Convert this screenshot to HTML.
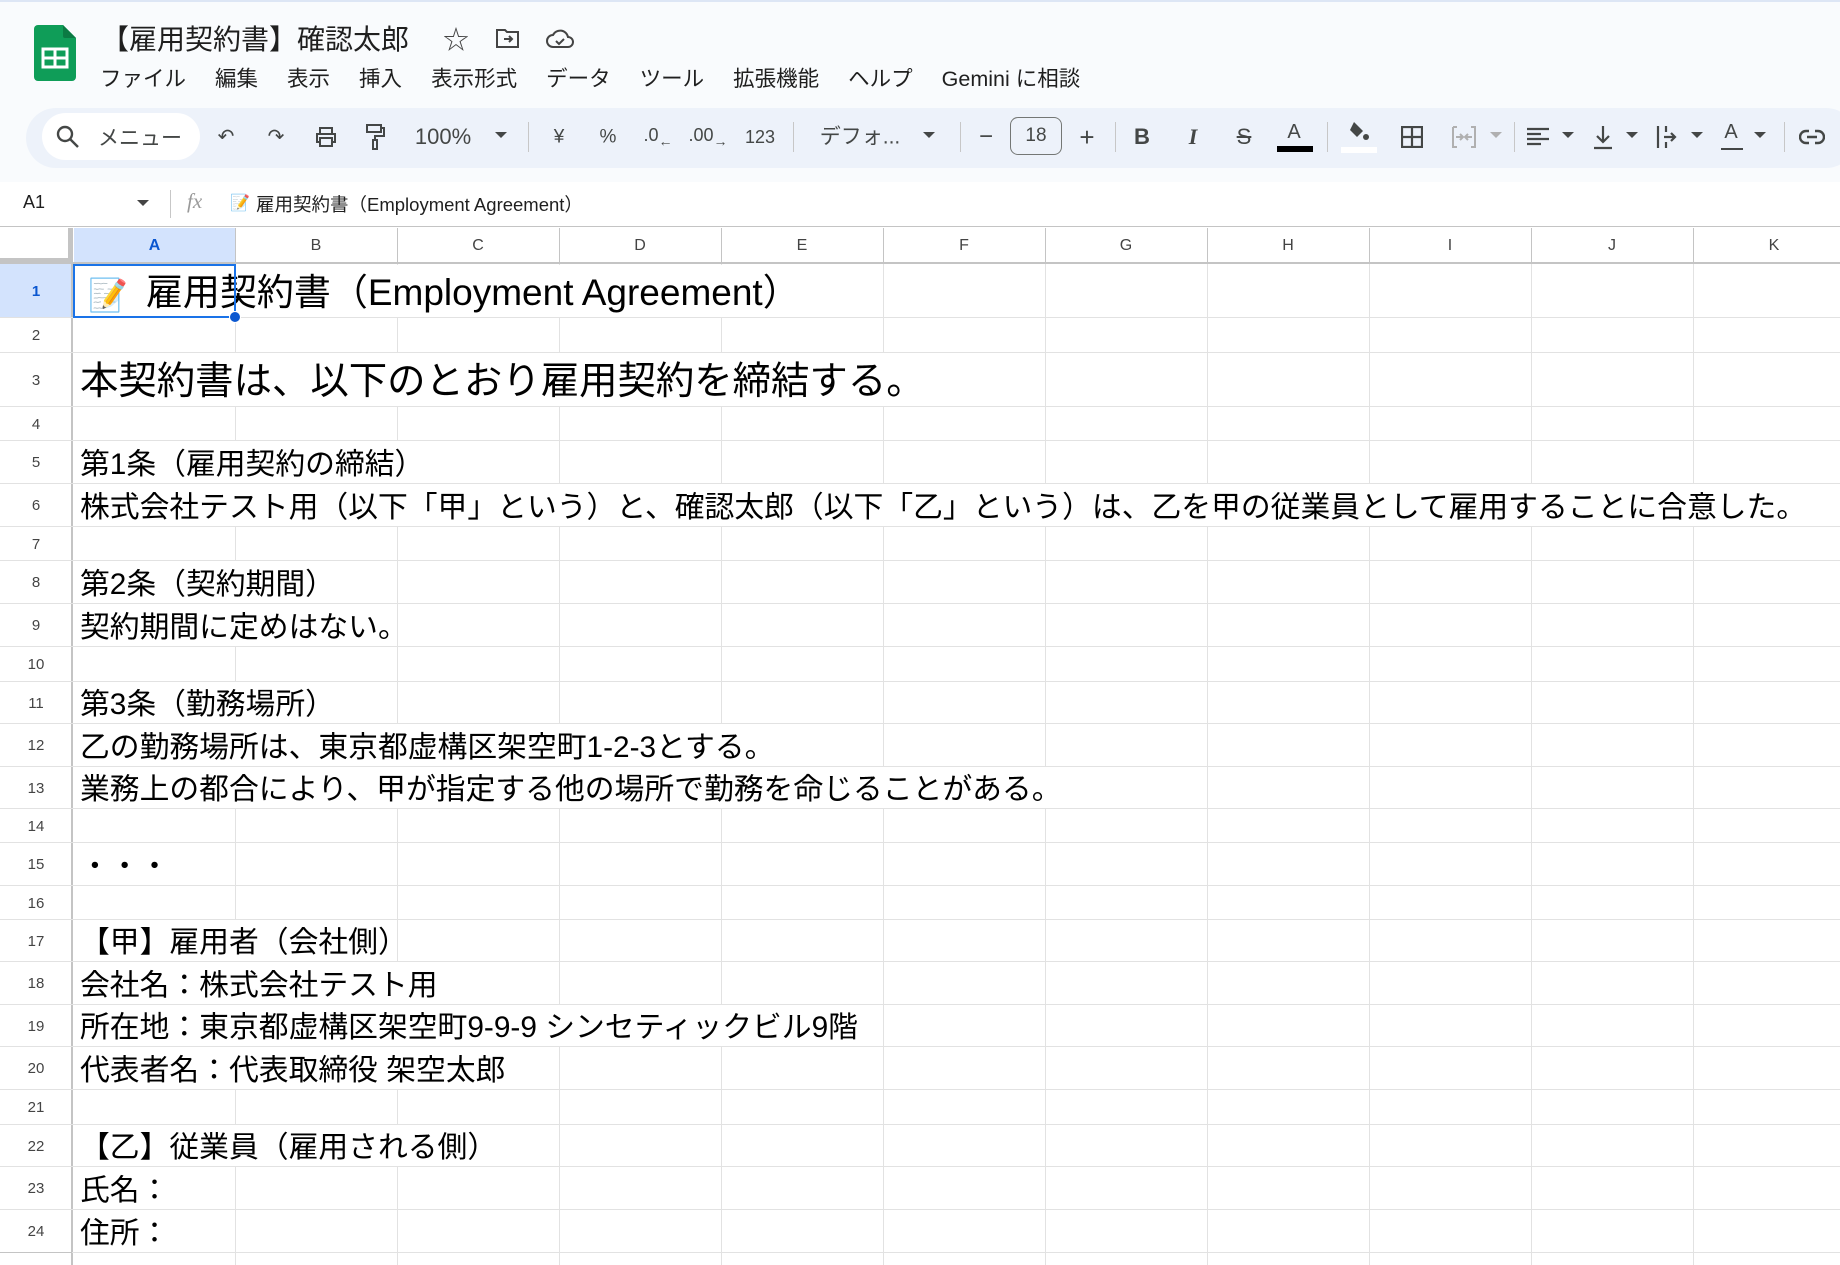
<!DOCTYPE html>
<html><head><meta charset="utf-8">
<style>
*{margin:0;padding:0;box-sizing:border-box}
body{width:1840px;height:1265px;overflow:hidden;background:#fff;font-family:"Liberation Sans","Noto Sans CJK JP",sans-serif;position:relative;color:#1f1f1f}
.a{position:absolute}
.top{left:0;top:0;width:1840px;height:182px;background:#f9fbfd;border-top:2px solid #dde6f5}
.menu span{margin-right:29px}
.tb{left:26px;top:108px;width:1830px;height:60px;background:#edf2fa;border-radius:30px}
.ic{position:absolute;top:137px;transform:translate(-50%,-50%);color:#444746;font-size:20px;line-height:1}
.sep{position:absolute;top:122px;width:1px;height:30px;background:#c7c7c7}
.car{position:absolute;top:132px;width:0;height:0;border-left:6px solid transparent;border-right:6px solid transparent;border-top:6px solid #444746}
.vl{position:absolute;width:1px;background:#e2e2e2}
.hl{position:absolute;height:1px;background:#e2e2e2;left:0;width:1840px}
.rn{position:absolute;left:0;width:72px;text-align:center;font-size:15px;color:#444;display:flex;align-items:center;justify-content:center}
.cl{position:absolute;top:228px;height:35px;text-align:center;font-size:16px;color:#444;display:flex;align-items:center;justify-content:center}
.t{position:absolute;left:75px;background:#fff;font-size:29.8px;color:#000;white-space:nowrap;padding-left:5px;display:flex;align-items:flex-end;font-family:"Liberation Sans","Noto Sans CJK JP",sans-serif;line-height:1}
</style></head><body>
<div class="a top"></div>
<svg class="a" style="left:34px;top:25px" width="42" height="56" viewBox="0 0 42 56"><path d="M4 0h25l13 13v39a4 4 0 0 1-4 4H4a4 4 0 0 1-4-4V4a4 4 0 0 1 4-4z" fill="#0f9d58"/><path d="M29 0l13 13H31a2 2 0 0 1-2-2z" fill="#0b7a43"/><rect x="9" y="24" width="24" height="18" fill="none" stroke="#fff" stroke-width="3"/><path d="M9 33h24M21 24v18" stroke="#fff" stroke-width="3"/></svg>
<div class="a" style="left:101px;top:18px;font-size:28px;color:#1f1f1f">【雇用契約書】確認太郎</div>
<div class="a" style="left:443px;top:20px;font-size:26px;color:#444">☆</div>
<svg class="a" style="left:495px;top:27px" width="26" height="22" viewBox="0 0 26 22"><path d="M2 3h8l2 2h11v15H2z" fill="none" stroke="#444" stroke-width="2"/><path d="M9 12h8M14 9l3 3-3 3" fill="none" stroke="#444" stroke-width="2"/></svg>
<svg class="a" style="left:545px;top:27px" width="30" height="22" viewBox="0 0 30 22"><path d="M8 20a6 6 0 0 1 0-12 8 8 0 0 1 15 2 5 5 0 0 1 0 10z" fill="none" stroke="#444" stroke-width="2"/><path d="M11 14l3 3 5-5" fill="none" stroke="#444" stroke-width="2"/></svg>
<div class="a menu" style="left:100px;top:62px;font-size:21.5px;color:#1f1f1f;white-space:nowrap"><span>ファイル</span><span>編集</span><span>表示</span><span>挿入</span><span>表示形式</span><span>データ</span><span>ツール</span><span>拡張機能</span><span>ヘルプ</span><span>Gemini に相談</span></div>
<div class="a tb"></div>
<div class="a" style="left:42px;top:113px;width:158px;height:47px;background:#fff;border-radius:24px"></div>
<svg class="a" style="left:56px;top:125px" width="24" height="24" viewBox="0 0 24 24"><circle cx="9" cy="9" r="7" fill="none" stroke="#444746" stroke-width="2.4"/><path d="M14 14l8 8" stroke="#444746" stroke-width="2.4"/></svg>
<div class="a" style="left:98px;top:122px;font-size:21px;color:#444746">メニュー</div>
<div class="ic" style="left:226px">↶</div>
<div class="ic" style="left:276px">↷</div>
<svg class="a" style="left:314px;top:125px" width="24" height="24" viewBox="0 0 24 24"><path d="M6 8V3h12v5M6 17H3V9h18v8h-3M6 13h12v8H6z" fill="none" stroke="#444746" stroke-width="2"/></svg>
<svg class="a" style="left:364px;top:123px" width="22" height="28" viewBox="0 0 22 28"><path d="M3 2h14v7H3zM17 5h3v8h-9v4M9 17h4v9H9z" fill="none" stroke="#444746" stroke-width="2"/></svg>
<div class="ic" style="left:443px;font-size:22px">100%</div>
<div class="car" style="left:495px"></div>
<div class="sep" style="left:528px"></div>
<div class="ic" style="left:559px;font-size:19px">¥</div>
<div class="ic" style="left:608px;font-size:19px">%</div>
<div class="ic" style="left:658px;font-size:18px">.0<sub style="font-size:14px">←</sub></div>
<div class="ic" style="left:708px;font-size:18px">.00<sub style="font-size:14px">→</sub></div>
<div class="ic" style="left:760px;font-size:18px">123</div>
<div class="sep" style="left:793px"></div>
<div class="ic" style="left:860px;font-size:21px">デフォ...</div>
<div class="car" style="left:923px"></div>
<div class="sep" style="left:960px"></div>
<div class="ic" style="left:986px;font-size:24px">−</div>
<div class="a" style="left:1010px;top:117px;width:52px;height:38px;border:1px solid #747775;border-radius:8px;text-align:center;line-height:36px;font-size:19px;color:#444746">18</div>
<div class="ic" style="left:1087px;font-size:26px">+</div>
<div class="sep" style="left:1115px"></div>
<div class="ic" style="left:1142px;font-weight:bold;font-size:22px">B</div>
<div class="ic" style="left:1193px;font-style:italic;font-weight:bold;font-size:22px;font-family:'Liberation Serif'">I</div>
<div class="ic" style="left:1244px;font-size:22px;text-decoration:line-through">S</div>
<div class="ic" style="left:1294px;font-size:20px;top:132px">A</div>
<div class="a" style="left:1277px;top:146px;width:36px;height:6px;background:#000"></div>
<div class="sep" style="left:1327px"></div>
<svg class="a" style="left:1346px;top:120px" width="26" height="26" viewBox="0 0 26 26"><path d="M8 2l9 9-6 6-7-7z" fill="#444746"/><circle cx="20" cy="17" r="3" fill="#444746"/></svg>
<div class="a" style="left:1341px;top:147px;width:36px;height:6px;background:#fff"></div>
<svg class="a" style="left:1401px;top:126px" width="22" height="22" viewBox="0 0 22 22"><path d="M1 1h20v20H1zM11 1v20M1 11h20" fill="none" stroke="#444746" stroke-width="2.2"/></svg>
<svg class="a" style="left:1452px;top:126px" width="24" height="22" viewBox="0 0 24 22"><path d="M1 1h4M1 1v20h4M19 1h4v20h-4M4 11h6M20 11h-6M8 8l3 3-3 3M16 8l-3 3 3 3" fill="none" stroke="#b0b0b0" stroke-width="2"/></svg>
<div class="car" style="left:1490px;border-top-color:#b0b0b0"></div>
<div class="sep" style="left:1514px"></div>
<svg class="a" style="left:1527px;top:127px" width="22" height="20" viewBox="0 0 22 20"><path d="M0 2h22M0 7h14M0 12h22M0 17h14" stroke="#444746" stroke-width="2.2"/></svg>
<div class="car" style="left:1562px"></div>
<svg class="a" style="left:1592px;top:124px" width="22" height="26" viewBox="0 0 22 26"><path d="M11 2v16M5 12l6 6 6-6M2 24h18" fill="none" stroke="#444746" stroke-width="2.2"/></svg>
<div class="car" style="left:1626px"></div>
<svg class="a" style="left:1656px;top:124px" width="22" height="26" viewBox="0 0 22 26"><path d="M2 2v22M10 2v6M10 18v6M8 13h11M15 9l4 4-4 4" fill="none" stroke="#444746" stroke-width="2.2"/></svg>
<div class="car" style="left:1691px"></div>
<div class="ic" style="left:1731px;font-size:20px;top:132px">A</div>
<div class="a" style="left:1721px;top:148px;width:22px;height:2px;background:#444746"></div>
<div class="car" style="left:1754px"></div>
<div class="sep" style="left:1784px"></div>
<svg class="a" style="left:1799px;top:128px" width="26" height="18" viewBox="0 0 26 18"><path d="M10 3H7a6 6 0 0 0 0 12h3M16 3h3a6 6 0 0 1 0 12h-3M8 9h10" fill="none" stroke="#444746" stroke-width="2.4"/></svg>
<div class="a" style="left:23px;top:192px;font-size:18px;color:#1f1f1f">A1</div>
<div class="car" style="left:137px;top:200px;border-top-color:#444"></div>
<div class="a" style="left:170px;top:190px;width:1px;height:28px;background:#c7c7c7"></div>
<div class="a" style="left:187px;top:189px;font-size:21px;color:#999;font-style:italic;font-family:'Liberation Serif'">fx</div>
<div class="a" style="left:230px;top:193px;font-size:16px">📝</div>
<div class="a" style="left:256px;top:191px;font-size:18.5px;color:#1f1f1f">雇用契約書（Employment Agreement）</div>
<div class="a" style="left:0;top:226px;width:1840px;height:1px;background:#c4c4c4"></div>
<div class="a" style="left:74px;top:228px;width:161px;height:35px;background:#d3e3fd"></div>
<div class="a" style="left:0;top:264px;width:72px;height:53px;background:#d3e3fd"></div>
<div class="a" style="left:0;top:228px;width:68px;height:30px;background:#fff"></div>
<div class="a" style="left:0;top:258px;width:72px;height:5px;background:#c4c4c4"></div>
<div class="a" style="left:68px;top:228px;width:5px;height:35px;background:#c4c4c4"></div>
<div class="a" style="left:0;top:262px;width:1840px;height:2px;background:#c4c4c4"></div>
<div class="a" style="left:71px;top:228px;width:2px;height:1037px;background:#c4c4c4"></div>
<div id="g"></div>
<script>
var cols=[74,235,397,559,721,883,1045,1207,1369,1531,1693,1855];
var L="ABCDEFGHIJK";var h='';
var rows=[54,35,54,34,43,43,34,43,43,35,42,43,42,34,43,34,42,43,42,43,35,42,43,43,40];
var ys=[264];for(var i=0;i<rows.length;i++)ys.push(ys[i]+rows[i]);
for(var i=0;i<11;i++){h+='<div class="cl" style="left:'+cols[i]+'px;width:'+(cols[i+1]-cols[i])+'px;'+(i==0?'font-weight:bold;color:#0b57d0':'')+'">'+L[i]+'</div>';
 if(i>0)h+='<div class="a" style="left:'+cols[i]+'px;top:228px;width:1px;height:35px;background:#c4c4c4"></div>';
 if(i>0)h+='<div class="vl" style="left:'+cols[i]+'px;top:264px;height:1001px"></div>';}
for(var r=0;r<24;r++){h+='<div class="hl" style="top:'+(ys[r+1]-1)+'px"></div>';
 h+='<div class="rn" style="top:'+ys[r]+'px;height:'+rows[r]+'px;'+(r==0?'font-weight:bold;color:#0b57d0':'')+'">'+(r+1)+'</div>';}
h+='<div class="a" style="left:0;top:'+(ys[24]-1)+'px;width:72px;height:1px;background:#c4c4c4"></div>';
var tx={3:['本契約書は、以下のとおり雇用契約を締結する。',1045,38.4],5:['第1条（雇用契約の締結）',559],6:['株式会社テスト用（以下「甲」という）と、確認太郎（以下「乙」という）は、乙を甲の従業員として雇用することに合意した。',1840],8:['第2条（契約期間）',397],9:['契約期間に定めはない。',397],11:['第3条（勤務場所）',397],12:['乙の勤務場所は、東京都虚構区架空町1-2-3とする。',883],13:['業務上の都合により、甲が指定する他の場所で勤務を命じることがある。',1207],15:['・・・',235],17:['【甲】雇用者（会社側）',397],18:['会社名：株式会社テスト用',559],19:['所在地：東京都虚構区架空町9-9-9 シンセティックビル9階',883],20:['代表者名：代表取締役 架空太郎',559],22:['【乙】従業員（雇用される側）',559],23:['氏名：',235],24:['住所：',235]};
for(var k in tx){var r=k-1,o=tx[k];h+='<div class="t" style="top:'+ys[r]+'px;height:'+(rows[r]-1)+'px;width:'+(o[1]-75)+'px;padding-bottom:'+(o[2]?5:3)+'px;font-size:'+(o[2]||29.8)+'px">'+o[0]+'</div>';}
h+='<div class="t" style="top:265px;height:52px;width:808px;padding-bottom:6px;font-size:37px"><span style="font-size:32px;margin:0 18px 0 8px">📝</span>雇用契約書（Employment Agreement）</div>';
h+='<div class="a" style="left:73px;top:264px;width:163px;height:54px;border:2px solid #1a73e8"></div>';
h+='<div class="a" style="left:229px;top:311px;width:12px;height:12px;border-radius:50%;background:#0b57d0;border:1px solid #fff"></div>';
document.getElementById('g').innerHTML=h;
</script>
</body></html>
